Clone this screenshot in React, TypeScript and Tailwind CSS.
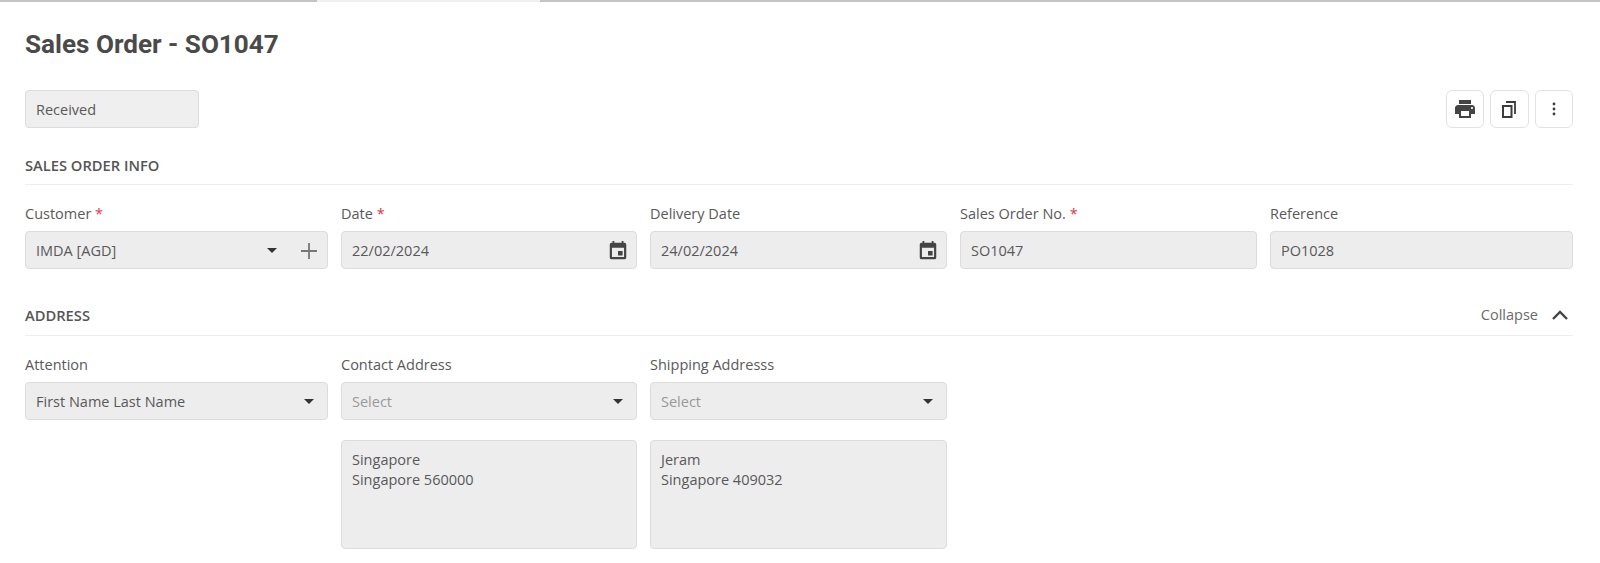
import React from "react";

const Caret = () => (
  <svg width="10" height="5" viewBox="0 0 10 5" className="shrink-0">
    <path d="M0 0h10L5 5z" fill="#333" />
  </svg>
);

const PlusIcon = () => (
  <svg width="16" height="16" viewBox="0 0 16 16" stroke="#777" strokeWidth="1.8" fill="none">
    <path d="M8 0v16M0 8h16" />
  </svg>
);

const ChevronIcon = () => (
  <svg width="16" height="10" viewBox="0 0 16 10" stroke="#444" strokeWidth="2.4" fill="none">
    <path d="M1 9l7-7 7 7" />
  </svg>
);

const CalendarIcon = () => (
  <svg width="22" height="22" viewBox="0 0 24 24" fill="#444">
    <path
      fillRule="evenodd"
      d="M6 1h2v2h8V1h2v2h1a2 2 0 012 2v14a2 2 0 01-2 2H5a2 2 0 01-2-2V5a2 2 0 012-2h1zM5.4 8.5v10h13.2v-10zM12 12h5v5h-5z"
    />
  </svg>
);

const PrintIcon = () => (
  <svg width="24" height="24" viewBox="0 0 24 24" fill="#444">
    <path d="M19 8H5c-1.66 0-3 1.34-3 3v6h4v4h12v-4h4v-6c0-1.66-1.34-3-3-3zm-3 11H8v-5h8v5zm3-7c-.55 0-1-.45-1-1s.45-1 1-1 1 .45 1 1-.45 1-1 1zm-1-9H6v4h12V3z" />
  </svg>
);

const CopyIcon = () => (
  <svg width="14" height="17" viewBox="0 0 14 17" fill="none" stroke="#3c3c3c">
    <path d="M4 1h9v12" strokeWidth="1.8" />
    <rect x="1" y="5" width="8.5" height="11" strokeWidth="2" />
  </svg>
);

const DotsIcon = () => (
  <svg width="4" height="14" viewBox="0 0 4 14" fill="#3c3c3c">
    <circle cx="2" cy="2" r="1.4" />
    <circle cx="2" cy="7" r="1.4" />
    <circle cx="2" cy="12" r="1.4" />
  </svg>
);

const boxClass =
  "flex h-[38px] items-center rounded border border-[#dcdcdc] bg-[#ededed] pt-px pl-2.5 pr-2.5 text-[14.5px] text-[#595959]";

const gridClass = "grid grid-cols-[303px_296px_297px_297px_303px] gap-x-[13px]";

function Label({ text, required }: { text: string; required?: boolean }) {
  return (
    <div className="mb-[5px] h-[24px] text-[14.5px] leading-[24px] text-[#595959]">
      {text}
      {required && <span className="text-[#dc3545]"> *</span>}
    </div>
  );
}

function ToolButton({ children }: { children: React.ReactNode }) {
  return (
    <div className="flex h-[38px] w-[38.5px] items-center justify-center rounded-md border border-[#e2e2e2] bg-white">
      {children}
    </div>
  );
}

function DateField({ label, value, required }: { label: string; value: string; required?: boolean }) {
  return (
    <div>
      <Label text={label} required={required} />
      <div className={boxClass + " justify-between pr-[7px]"}>
        <span>{value}</span>
        <CalendarIcon />
      </div>
    </div>
  );
}

function TextField({ label, value, required }: { label: string; value: string; required?: boolean }) {
  return (
    <div>
      <Label text={label} required={required} />
      <div className={boxClass}>{value}</div>
    </div>
  );
}

function SelectField({ label, value, placeholder }: { label: string; value: string; placeholder?: boolean }) {
  return (
    <div>
      <Label text={label} />
      <div className={boxClass + " justify-between pr-[13px]"}>
        <span className={placeholder ? "text-[#999]" : ""}>{value}</span>
        <Caret />
      </div>
    </div>
  );
}

function AddressBox({ lines }: { lines: string[] }) {
  return (
    <div className="h-[109px] rounded border border-[#dcdcdc] bg-[#ededed] px-2.5 pt-[9px] text-[14.5px] leading-[20px] text-[#595959]">
      {lines.map((l) => (
        <div key={l}>{l}</div>
      ))}
    </div>
  );
}

export default function App() {
  return (
    <div className="h-[563px] overflow-hidden bg-white font-['Open_Sans','Noto_Sans',sans-serif]">
      <div className="flex h-[2px]">
        <div className="w-[317px] bg-[#c4c4c4]" />
        <div className="w-[223px] bg-[#efefef]" />
        <div className="flex-1 bg-[#c4c4c4]" />
      </div>

      <div className="pl-[25px] pr-[27px]">
        <h1 className="mt-[24px] h-[36px] font-['Roboto',sans-serif] text-[26.1px] leading-[36px] font-bold text-[#4a4a4a]">
          Sales Order - SO1047
        </h1>

        <div className="mt-[28px] flex items-center justify-between">
          <div className={boxClass + " w-[174px] bg-[#efefef]"}>Received</div>
          <div className="flex gap-[6px]">
            <ToolButton>
              <PrintIcon />
            </ToolButton>
            <ToolButton>
              <CopyIcon />
            </ToolButton>
            <ToolButton>
              <DotsIcon />
            </ToolButton>
          </div>
        </div>

        <div className="mt-[25px] border-b border-[#eeeeee] pb-[7px] text-[14.7px] leading-[24px] font-semibold text-[#555]">
          SALES ORDER INFO
        </div>

        <div className={"mt-[17px] " + gridClass}>
          <div>
            <Label text="Customer" required />
            <div className={boxClass + " justify-between pr-[10px]"}>
              <span>IMDA [AGD]</span>
              <div className="flex items-center gap-[24px]">
                <Caret />
                <PlusIcon />
              </div>
            </div>
          </div>
          <DateField label="Date" value="22/02/2024" required />
          <DateField label="Delivery Date" value="24/02/2024" />
          <TextField label="Sales Order No." value="SO1047" required />
          <TextField label="Reference" value="PO1028" />
        </div>

        <div className="mt-[34px] flex items-center justify-between border-b border-[#eeeeee] pb-[8px] leading-[24px]">
          <span className="text-[14.7px] font-semibold text-[#555]">ADDRESS</span>
          <span className="mr-[5px] flex items-center gap-[14px] text-[14.5px] text-[#6a6a6a]">
            Collapse
            <ChevronIcon />
          </span>
        </div>

        <div className={"mt-[17px] " + gridClass}>
          <SelectField label="Attention" value="First Name Last Name" />
          <SelectField label="Contact Address" value="Select" placeholder />
          <SelectField label="Shipping Addresss" value="Select" placeholder />
        </div>

        <div className={"mt-[20px] " + gridClass}>
          <div />
          <AddressBox lines={["Singapore", "Singapore 560000"]} />
          <AddressBox lines={["Jeram", "Singapore 409032"]} />
        </div>
      </div>
    </div>
  );
}
